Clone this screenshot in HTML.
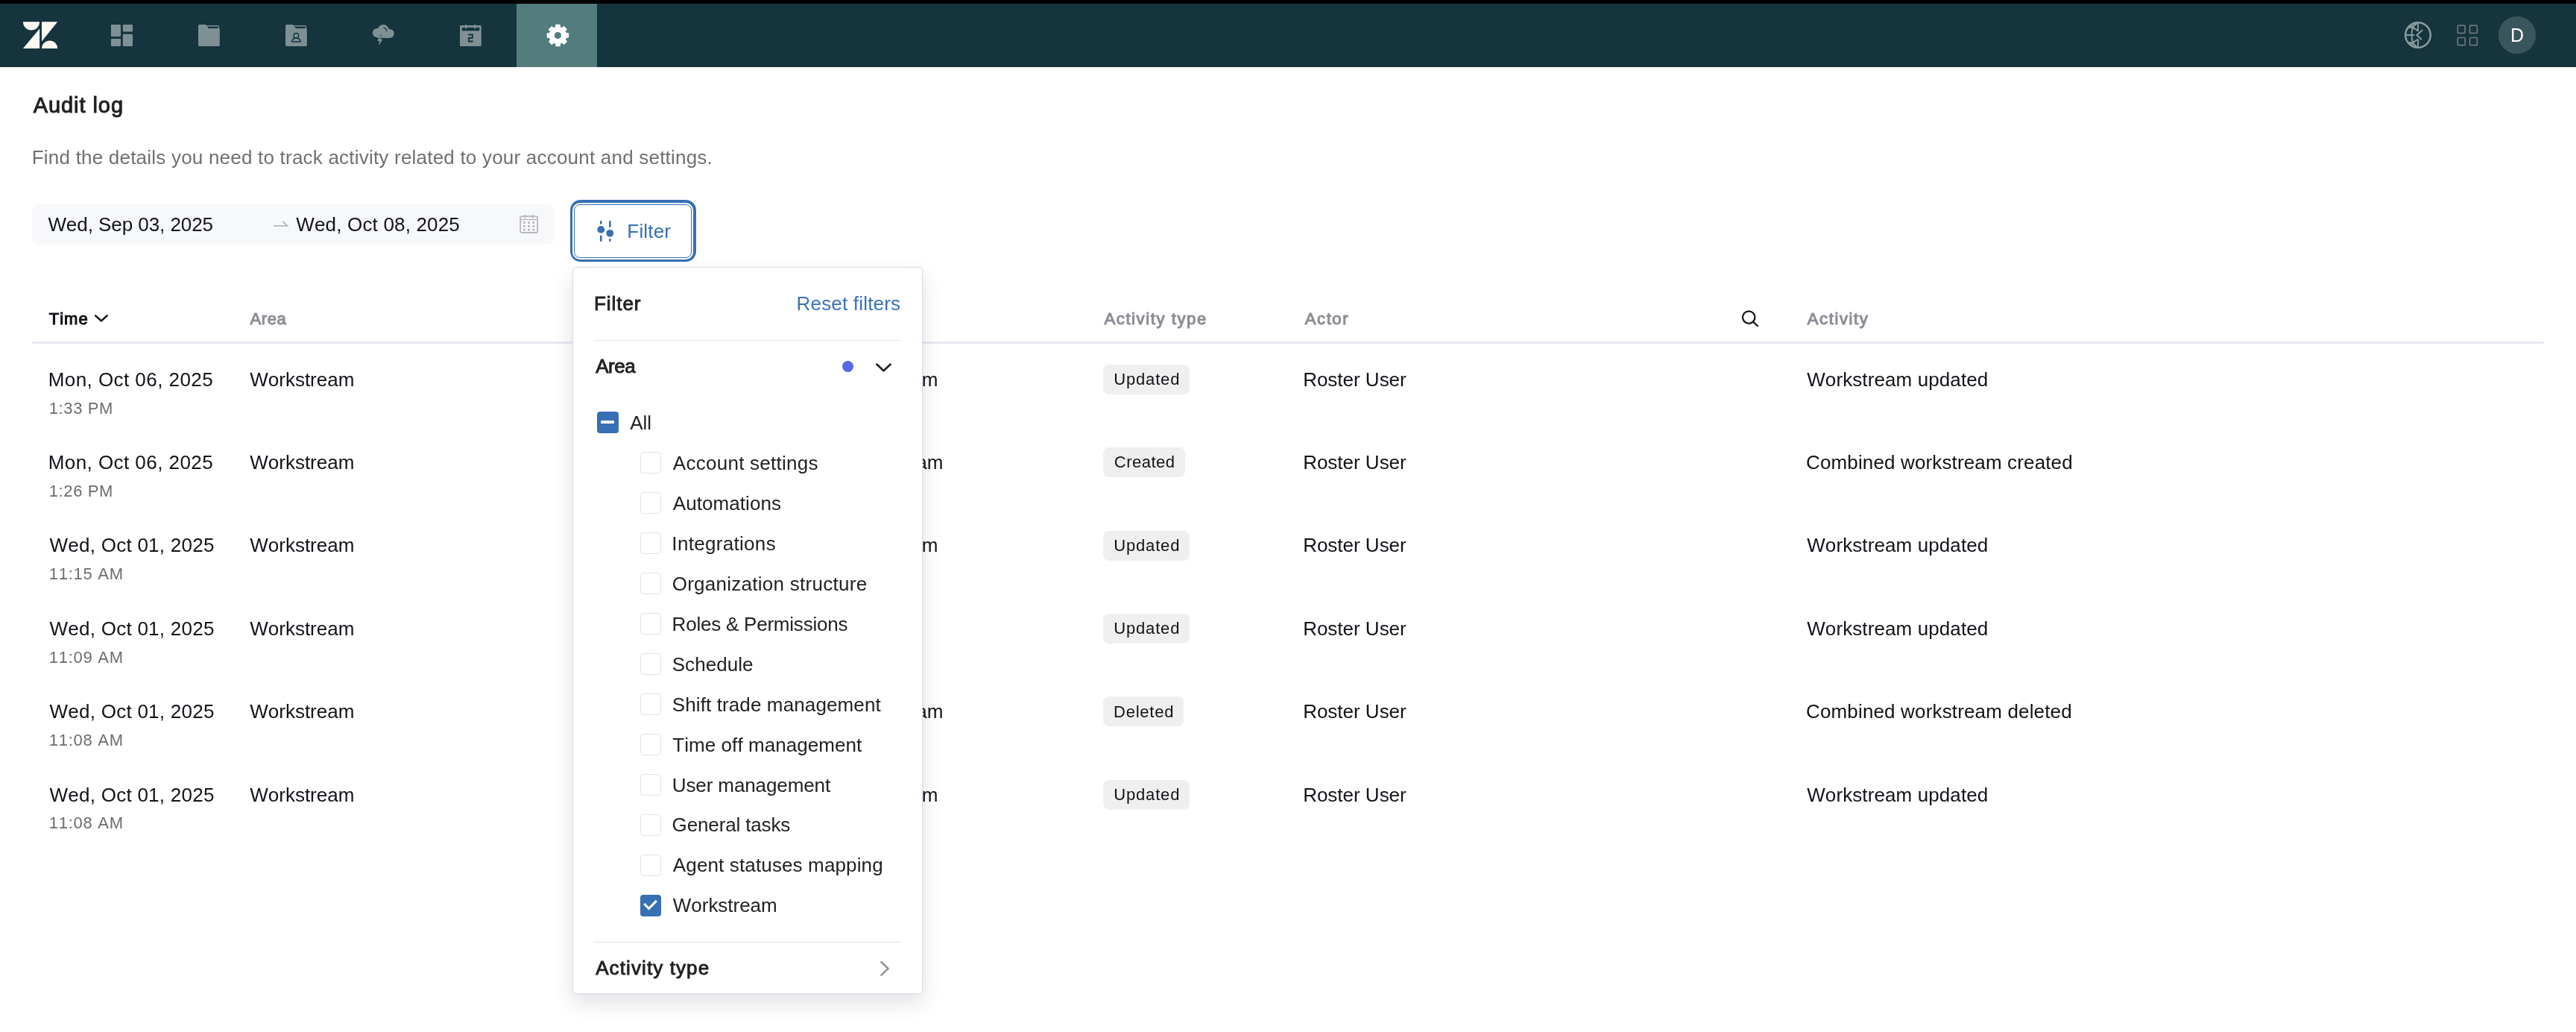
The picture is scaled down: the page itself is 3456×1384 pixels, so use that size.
<!DOCTYPE html>
<html lang="en"><head><meta charset="utf-8"><title>Audit log</title>
<style>
html,body{margin:0;padding:0;background:#fff;}
body{width:3456px;height:1384px;position:relative;overflow:hidden;font-family:"Liberation Sans",sans-serif;font-kerning:none;}
#root{position:absolute;left:0;top:0;width:3456px;height:1384px;will-change:transform;}
.t{position:absolute;white-space:pre;line-height:1;}
.abs{position:absolute;}
.topbar{position:absolute;left:0;top:0;width:3456px;height:5px;background:#000;}
.nav{position:absolute;left:0;top:5px;width:3456px;height:85px;background:#15343d;}
.tab{position:absolute;left:693px;top:5px;width:108px;height:85px;background:#537c7c;}
.range{position:absolute;left:43px;top:274px;width:699.5px;height:54px;border-radius:8px;background:#f7f8fa;}
.fring{position:absolute;left:764.7px;top:268.3px;width:169px;height:83px;border-radius:14px;background:#3670b5;}
.fbtn{position:absolute;left:770.2px;top:273.8px;width:158px;height:72.2px;border-radius:8px;background:#fff;box-shadow:0 0 0 2px #fff;border:1.6px solid #3670b5;box-sizing:border-box;}
.hline{position:absolute;left:43px;top:458px;width:3370px;height:3px;background:#e8e8f0;}
.badge{position:absolute;left:1480px;height:40px;border-radius:8px;background:#efefef;}
.pop{position:absolute;left:767.6px;top:358.1px;width:470.2px;height:975.1px;box-sizing:border-box;border-radius:5px;background:#fff;border:1.5px solid #dddde8;box-shadow:0 12px 28px rgba(20,20,45,0.12),0 0 4px rgba(20,20,45,0.05);}
.sep{position:absolute;left:797px;width:411px;height:1.6px;background:#e1e3ec;}
.dot{position:absolute;left:1130px;top:483.5px;width:15px;height:15px;border-radius:50%;background:#5468e7;}
.cb{position:absolute;width:28px;height:28.6px;box-sizing:border-box;border:1.6px solid #e2e0ec;border-radius:4.2px;background:#fff;}
.cb.on{background:#3670b5;border:none;border-radius:4px;}
.cb.on svg{position:absolute;left:0;top:0;}
.cb.all{width:29px;height:28.6px;}
.dash{position:absolute;left:5.4px;top:12.1px;width:18px;height:4.2px;background:#fff;border-radius:1px;}
</style></head>
<body>
<div id="root">
<div class="topbar"></div>
<div class="nav"></div>
<div class="tab"></div>
<svg class="abs" style="left:0;top:0" width="3456" height="90" viewBox="0 0 3456 90">
<g fill="#fdf8f2"><path d="M30.9 29.3H53.1A11.1 11.1 0 0 1 30.9 29.3Z"/><path d="M53.1 38.6V65H30.9Z"/><path d="M56 29.3H77.2L56 55.6Z"/><path d="M56 65A10.6 10.6 0 0 1 77.2 65Z"/></g>
<g fill="#7f9094"><rect x="148.9" y="33.1" width="13.1" height="15.9" rx="1.1"/><rect x="148.9" y="51.9" width="13.1" height="10.1" rx="1.1"/><rect x="164.8" y="33.1" width="13.2" height="9.4" rx="1.1"/><rect x="164.8" y="45.8" width="13.2" height="16.2" rx="1.1"/></g>
<path fill="#7f9094" d="M267.5 32.9H276.4L279.8 38H293.3a1.5 1.5 0 0 1 1.5 1.5V60.5a1.5 1.5 0 0 1-1.5 1.5H267.5a1.5 1.5 0 0 1-1.5-1.5V34.4a1.5 1.5 0 0 1 1.5-1.5Z"/><path fill="none" stroke="#7f9094" stroke-width="1.4" d="M278 34.7H292.2a1.2 1.2 0 0 1 1.2 1.2V39"/>
<path fill="#7f9094" d="M384.5 32.9H393.4L396.8 38H410.3a1.5 1.5 0 0 1 1.5 1.5V60.5a1.5 1.5 0 0 1-1.5 1.5H384.5a1.5 1.5 0 0 1-1.5-1.5V34.4a1.5 1.5 0 0 1 1.5-1.5Z"/><path fill="none" stroke="#7f9094" stroke-width="1.4" d="M395 34.7H409.2a1.2 1.2 0 0 1 1.2 1.2V39"/>
<g fill="none" stroke="#15343d" stroke-width="1.5"><circle cx="397.3" cy="47.9" r="3.3"/><path d="M391.7 56V55.5a5.7 4.5 0 0 1 11.4 0V56Z" stroke-linejoin="round"/></g>
<g fill="#7f9094"><circle cx="505.7" cy="44" r="5.9"/><circle cx="514.2" cy="40.5" r="7.6"/><circle cx="522.8" cy="45" r="6"/><rect x="505.7" y="43" width="17.1" height="8" /></g>
<path d="M515 37.1A5.2 5.2 0 0 1 518.7 41.6" fill="none" stroke="#15343d" stroke-width="1.3" stroke-linecap="round"/>
<path d="M511.1 46.6L506.3 54.7H509.3L508.1 61L513.1 52.7H510.1Z" fill="#7f9094" stroke="#15343d" stroke-width="1" paint-order="stroke"/>
<path d="M511.1 46.6L506.3 54.7H509.3L508.1 61L513.1 52.7H510.1Z" fill="#7f9094"/>
<rect x="617" y="34" width="28.8" height="28" rx="1.6" fill="#7f9094"/>
<rect x="619.9" y="36.9" width="23.3" height="4.4" fill="#15343d"/>
<rect x="624.3" y="32.9" width="1.7" height="5.8" fill="#7f9094"/><rect x="636.5" y="32.9" width="1.7" height="5.8" fill="#7f9094"/>
<path d="M628.2 46.5H633.8V51H629V55.6H634.8" fill="none" stroke="#15343d" stroke-width="2"/>
<g fill="#fff"><circle cx="748.4" cy="47.5" r="11.8"/><rect x="745.0" y="32.8" width="6.6" height="8" rx="0.9" transform="rotate(0 748.4 47.5)"/><rect x="745.0" y="32.8" width="6.6" height="8" rx="0.9" transform="rotate(45 748.4 47.5)"/><rect x="745.0" y="32.8" width="6.6" height="8" rx="0.9" transform="rotate(90 748.4 47.5)"/><rect x="745.0" y="32.8" width="6.6" height="8" rx="0.9" transform="rotate(135 748.4 47.5)"/><rect x="745.0" y="32.8" width="6.6" height="8" rx="0.9" transform="rotate(180 748.4 47.5)"/><rect x="745.0" y="32.8" width="6.6" height="8" rx="0.9" transform="rotate(225 748.4 47.5)"/><rect x="745.0" y="32.8" width="6.6" height="8" rx="0.9" transform="rotate(270 748.4 47.5)"/><rect x="745.0" y="32.8" width="6.6" height="8" rx="0.9" transform="rotate(315 748.4 47.5)"/></g><circle cx="748.4" cy="47.5" r="4.6" fill="#537c7c"/>
<g fill="none" stroke="#8a9ca0" stroke-width="2.5"><circle cx="3244" cy="47" r="16.8"/></g>
<g fill="none" stroke="#8a9ca0" stroke-width="1.9"><path d="M3244.1 31V42.2M3244.1 52.6V63M3227.5 47H3239.3"/><path d="M3243 30.6C3233 36 3233 58 3243 63.4"/><path d="M3231.3 37.2C3235.5 36.6 3240.5 38 3243.3 41.3"/><path d="M3231.3 56.8C3235.5 57.4 3240.5 56 3243.3 52.7"/><path d="M3233.8 36.2L3242 32.4M3233.8 57.8L3242 61.6"/></g>
<path d="M3249.6 40.7L3242.4 47L3248.2 52.6" fill="none" stroke="#8a9ca0" stroke-width="2.1" stroke-linecap="round" stroke-linejoin="miter"/>
<g fill="none" stroke="#6e777b" stroke-width="1.7"><rect x="3297.3" y="34.2" width="9.9" height="10.2" rx="1.1"/><rect x="3297.3" y="50.5" width="9.9" height="10.2" rx="1.1"/><rect x="3313.5" y="34.2" width="9.9" height="10.2" rx="1.1"/><rect x="3313.5" y="50.5" width="9.9" height="10.2" rx="1.1"/></g>
<circle cx="3377" cy="47" r="25.2" fill="#3a555c"/>
</svg>
<span class="t" style="left:3367.95px;top:35px;font-size:25px;color:#fff;letter-spacing:0.000px;">D</span>
<span class="t" style="left:44.64px;top:127px;font-size:29px;color:#222;letter-spacing:0.946px;-webkit-text-stroke:1.0px #222;">Audit log</span>
<span class="t" style="left:42.77px;top:198px;font-size:26px;color:#707070;letter-spacing:0.212px;">Find the details you need to track activity related to your account and settings.</span>
<div class="range"></div>
<span class="t" style="left:64.39px;top:288px;font-size:26px;color:#111318;letter-spacing:-0.056px;">Wed, Sep 03, 2025</span>
<span class="t" style="left:397.29px;top:288px;font-size:26px;color:#111318;letter-spacing:0.170px;">Wed, Oct 08, 2025</span>
<svg class="abs" style="left:366px;top:294px" width="22" height="12" viewBox="0 0 22 12"><path d="M1.2 8.9 H19.4 L13.5 3" fill="none" stroke="#b6b7bb" stroke-width="1.9" stroke-linejoin="miter"/></svg>
<svg class="abs" style="left:696px;top:287px" width="28" height="28" viewBox="0 0 28 28" fill="none" stroke="#b7b7bc" stroke-width="1.8">
<rect x="2.1" y="3.1" width="23" height="21.9" rx="1.8"/><path d="M2.1 7.5H25.1" stroke-width="1.3"/><path d="M8.3 1.1V5.7M18.7 1.1V5.7" stroke-width="1.7"/>
<g fill="#b4b4b9" stroke="none"><circle cx="7.4" cy="11.5" r="1.5"/><circle cx="13.5" cy="11.5" r="1.5"/><circle cx="19.8" cy="11.5" r="1.5"/><circle cx="7.4" cy="16.2" r="1.5"/><circle cx="13.5" cy="16.2" r="1.5"/><circle cx="19.8" cy="16.2" r="1.5"/><circle cx="7.4" cy="20.9" r="1.5"/><circle cx="13.5" cy="20.9" r="1.5"/><circle cx="19.8" cy="20.9" r="1.5"/></g></svg>
<div class="fring"></div><div class="fbtn"></div>
<svg class="abs" style="left:798px;top:292px" width="30" height="36" viewBox="798 292 30 36" fill="#3670b5">
<rect x="805" y="296" width="2.6" height="4.7" rx="1.2"/><circle cx="806.3" cy="307.9" r="4.9"/><rect x="805" y="315.5" width="2.6" height="8.4" rx="1.2"/>
<rect x="817" y="296" width="2.6" height="9" rx="1.2"/><circle cx="818.3" cy="312.8" r="4.9"/><rect x="817" y="320.1" width="2.6" height="3.8" rx="1.2"/></svg>
<span class="t" style="left:841.37px;top:297px;font-size:26px;color:#3670b5;letter-spacing:0.178px;">Filter</span>
<span class="t" style="left:65.66px;top:417px;font-size:22px;color:#111318;letter-spacing:1.061px;-webkit-text-stroke:1.1px #111318;">Time</span>
<svg class="abs" style="left:124px;top:418px" width="24" height="18" viewBox="124 418 24 18"><path d="M128.2 423.4 L135.9 430.4 L143.6 423.4" fill="none" stroke="#111318" stroke-width="2.6" stroke-linecap="round" stroke-linejoin="round"/></svg>
<span class="t" style="left:335.51px;top:417px;font-size:22px;color:#8e8e96;letter-spacing:0.624px;-webkit-text-stroke:1.1px #8e8e96;">Area</span>
<span class="t" style="left:1481.51px;top:417px;font-size:22px;color:#8e8e96;letter-spacing:1.604px;-webkit-text-stroke:1.1px #8e8e96;">Activity type</span>
<span class="t" style="left:1750.81px;top:417px;font-size:22px;color:#8e8e96;letter-spacing:1.590px;-webkit-text-stroke:1.1px #8e8e96;">Actor</span>
<span class="t" style="left:2424.81px;top:417px;font-size:22px;color:#8e8e96;letter-spacing:1.602px;-webkit-text-stroke:1.1px #8e8e96;">Activity</span>
<svg class="abs" style="left:2334px;top:414px" width="28" height="28" viewBox="2334 414 28 28" fill="none" stroke="#111318" stroke-width="2.2" stroke-linecap="round"><circle cx="2346.2" cy="425.6" r="8.2"/><path d="M2352.3 431.7 L2358 437.2"/></svg>
<div class="hline"></div>
<span class="t" style="left:64.67px;top:496px;font-size:26px;color:#111318;letter-spacing:0.445px;">Mon, Oct 06, 2025</span>
<span class="t" style="left:65.72px;top:537px;font-size:22px;color:#6c6c70;letter-spacing:0.608px;">1:33 PM</span>
<span class="t" style="left:335.29px;top:496px;font-size:26px;color:#111318;letter-spacing:-0.010px;">Workstream</span>
<span class="t" style="left:1118.49px;top:496px;font-size:26px;color:#111318;letter-spacing:-0.010px;">Workstream</span>
<div class="badge" style="top:489.0px;width:116.0px"></div>
<span class="t" style="left:1494.20px;top:498px;font-size:22px;color:#111318;letter-spacing:0.840px;">Updated</span>
<span class="t" style="left:1748.17px;top:496px;font-size:26px;color:#111318;letter-spacing:-0.013px;">Roster User</span>
<span class="t" style="left:2424.19px;top:496px;font-size:26px;color:#111318;letter-spacing:0.104px;">Workstream updated</span>
<span class="t" style="left:64.67px;top:607px;font-size:26px;color:#111318;letter-spacing:0.445px;">Mon, Oct 06, 2025</span>
<span class="t" style="left:65.72px;top:648px;font-size:22px;color:#6c6c70;letter-spacing:0.608px;">1:26 PM</span>
<span class="t" style="left:335.29px;top:607px;font-size:26px;color:#111318;letter-spacing:-0.010px;">Workstream</span>
<span class="t" style="left:1125.39px;top:607px;font-size:26px;color:#111318;letter-spacing:-0.010px;">Workstream</span>
<div class="badge" style="top:600.4px;width:109.7px"></div>
<span class="t" style="left:1494.78px;top:609px;font-size:22px;color:#111318;letter-spacing:0.511px;">Created</span>
<span class="t" style="left:1748.17px;top:607px;font-size:26px;color:#111318;letter-spacing:-0.013px;">Roster User</span>
<span class="t" style="left:2422.98px;top:607px;font-size:26px;color:#111318;letter-spacing:0.141px;">Combined workstream created</span>
<span class="t" style="left:66.49px;top:718px;font-size:26px;color:#111318;letter-spacing:0.258px;">Wed, Oct 01, 2025</span>
<span class="t" style="left:65.72px;top:759px;font-size:22px;color:#6c6c70;letter-spacing:0.745px;">11:15 AM</span>
<span class="t" style="left:335.29px;top:718px;font-size:26px;color:#111318;letter-spacing:-0.010px;">Workstream</span>
<span class="t" style="left:1118.49px;top:718px;font-size:26px;color:#111318;letter-spacing:-0.010px;">Workstream</span>
<div class="badge" style="top:711.7px;width:116.0px"></div>
<span class="t" style="left:1494.20px;top:721px;font-size:22px;color:#111318;letter-spacing:0.840px;">Updated</span>
<span class="t" style="left:1748.17px;top:718px;font-size:26px;color:#111318;letter-spacing:-0.013px;">Roster User</span>
<span class="t" style="left:2424.19px;top:718px;font-size:26px;color:#111318;letter-spacing:0.104px;">Workstream updated</span>
<span class="t" style="left:66.49px;top:830px;font-size:26px;color:#111318;letter-spacing:0.258px;">Wed, Oct 01, 2025</span>
<span class="t" style="left:65.72px;top:871px;font-size:22px;color:#6c6c70;letter-spacing:0.745px;">11:09 AM</span>
<span class="t" style="left:335.29px;top:830px;font-size:26px;color:#111318;letter-spacing:-0.010px;">Workstream</span>
<div class="badge" style="top:823.0px;width:116.0px"></div>
<span class="t" style="left:1494.20px;top:832px;font-size:22px;color:#111318;letter-spacing:0.840px;">Updated</span>
<span class="t" style="left:1748.17px;top:830px;font-size:26px;color:#111318;letter-spacing:-0.013px;">Roster User</span>
<span class="t" style="left:2424.19px;top:830px;font-size:26px;color:#111318;letter-spacing:0.104px;">Workstream updated</span>
<span class="t" style="left:66.49px;top:941px;font-size:26px;color:#111318;letter-spacing:0.258px;">Wed, Oct 01, 2025</span>
<span class="t" style="left:65.72px;top:982px;font-size:22px;color:#6c6c70;letter-spacing:0.745px;">11:08 AM</span>
<span class="t" style="left:335.29px;top:941px;font-size:26px;color:#111318;letter-spacing:-0.010px;">Workstream</span>
<span class="t" style="left:1125.39px;top:941px;font-size:26px;color:#111318;letter-spacing:-0.010px;">Workstream</span>
<div class="badge" style="top:934.4px;width:107.9px"></div>
<span class="t" style="left:1494.10px;top:944px;font-size:22px;color:#111318;letter-spacing:0.749px;">Deleted</span>
<span class="t" style="left:1748.17px;top:941px;font-size:26px;color:#111318;letter-spacing:-0.013px;">Roster User</span>
<span class="t" style="left:2422.98px;top:941px;font-size:26px;color:#111318;letter-spacing:0.157px;">Combined workstream deleted</span>
<span class="t" style="left:66.49px;top:1053px;font-size:26px;color:#111318;letter-spacing:0.258px;">Wed, Oct 01, 2025</span>
<span class="t" style="left:65.72px;top:1093px;font-size:22px;color:#6c6c70;letter-spacing:0.745px;">11:08 AM</span>
<span class="t" style="left:335.29px;top:1053px;font-size:26px;color:#111318;letter-spacing:-0.010px;">Workstream</span>
<span class="t" style="left:1118.49px;top:1053px;font-size:26px;color:#111318;letter-spacing:-0.010px;">Workstream</span>
<div class="badge" style="top:1045.8px;width:116.0px"></div>
<span class="t" style="left:1494.20px;top:1055px;font-size:22px;color:#111318;letter-spacing:0.840px;">Updated</span>
<span class="t" style="left:1748.17px;top:1053px;font-size:26px;color:#111318;letter-spacing:-0.013px;">Roster User</span>
<span class="t" style="left:2424.19px;top:1053px;font-size:26px;color:#111318;letter-spacing:0.104px;">Workstream updated</span>
<div class="pop"></div>
<span class="t" style="left:797.07px;top:394px;font-size:26px;color:#222;letter-spacing:0.928px;-webkit-text-stroke:0.9px #222;">Filter</span>
<span class="t" style="left:1068.57px;top:394px;font-size:26px;color:#3972b9;letter-spacing:0.184px;">Reset filters</span>
<div class="sep" style="top:455.8px"></div>
<span class="t" style="left:799.15px;top:478px;font-size:26px;color:#222;letter-spacing:-0.440px;-webkit-text-stroke:0.9px #222;">Area</span>
<div class="dot"></div>
<svg class="abs" style="left:1170px;top:482px" width="32" height="22" viewBox="1170 482 32 22"><path d="M1176.3 488.6 L1185.5 497.2 L1194.7 488.6" fill="none" stroke="#222" stroke-width="2.7" stroke-linecap="round" stroke-linejoin="round"/></svg>
<div class="cb on all" style="left:801px;top:552.2px"><i class="dash"></i></div>
<span class="t" style="left:845.15px;top:554px;font-size:26px;color:#222;letter-spacing:-0.002px;">All</span>
<div class="cb" style="left:859.2px;top:606.3px"></div>
<span class="t" style="left:902.85px;top:608px;font-size:26px;color:#222;letter-spacing:0.261px;">Account settings</span>
<div class="cb" style="left:859.2px;top:660.3px"></div>
<span class="t" style="left:902.85px;top:662px;font-size:26px;color:#222;letter-spacing:0.057px;">Automations</span>
<div class="cb" style="left:859.2px;top:714.3px"></div>
<span class="t" style="left:901.35px;top:716px;font-size:26px;color:#222;letter-spacing:0.311px;">Integrations</span>
<div class="cb" style="left:859.2px;top:768.3px"></div>
<span class="t" style="left:901.67px;top:770px;font-size:26px;color:#222;letter-spacing:0.272px;">Organization structure</span>
<div class="cb" style="left:859.2px;top:822.3px"></div>
<span class="t" style="left:901.62px;top:824px;font-size:26px;color:#222;letter-spacing:-0.224px;">Roles &amp; Permissions</span>
<div class="cb" style="left:859.2px;top:876.3px"></div>
<span class="t" style="left:901.72px;top:878px;font-size:26px;color:#222;letter-spacing:0.060px;">Schedule</span>
<div class="cb" style="left:859.2px;top:930.3px"></div>
<span class="t" style="left:901.72px;top:932px;font-size:26px;color:#222;letter-spacing:0.118px;">Shift trade management</span>
<div class="cb" style="left:859.2px;top:984.3px"></div>
<span class="t" style="left:902.32px;top:986px;font-size:26px;color:#222;letter-spacing:0.055px;">Time off management</span>
<div class="cb" style="left:859.2px;top:1038.3px"></div>
<span class="t" style="left:901.74px;top:1040px;font-size:26px;color:#222;letter-spacing:-0.102px;">User management</span>
<div class="cb" style="left:859.2px;top:1092.3px"></div>
<span class="t" style="left:901.59px;top:1093px;font-size:26px;color:#222;letter-spacing:-0.138px;">General tasks</span>
<div class="cb" style="left:859.2px;top:1146.3px"></div>
<span class="t" style="left:902.85px;top:1147px;font-size:26px;color:#222;letter-spacing:0.137px;">Agent statuses mapping</span>
<div class="cb on" style="left:859.2px;top:1200.3px"><svg width="28" height="28" viewBox="0 0 28 28"><path d="M5.3 12 L11.5 18.5 L21.8 7.9" fill="none" stroke="#fff" stroke-width="3.2" stroke-linecap="butt" stroke-linejoin="miter"/></svg></div>
<span class="t" style="left:902.79px;top:1201px;font-size:26px;color:#222;letter-spacing:-0.021px;">Workstream</span>
<div class="sep" style="top:1262.6px"></div>
<span class="t" style="left:799.15px;top:1285px;font-size:26px;color:#222;letter-spacing:1.104px;-webkit-text-stroke:0.9px #222;">Activity type</span>
<svg class="abs" style="left:1176px;top:1284px" width="24" height="30" viewBox="1176 1284 24 30"><path d="M1182.4 1290.2 L1191.6 1298.9 L1182.4 1307.6" fill="none" stroke="#949498" stroke-width="2.6" stroke-linecap="round" stroke-linejoin="round"/></svg>
</div>
</body></html>
